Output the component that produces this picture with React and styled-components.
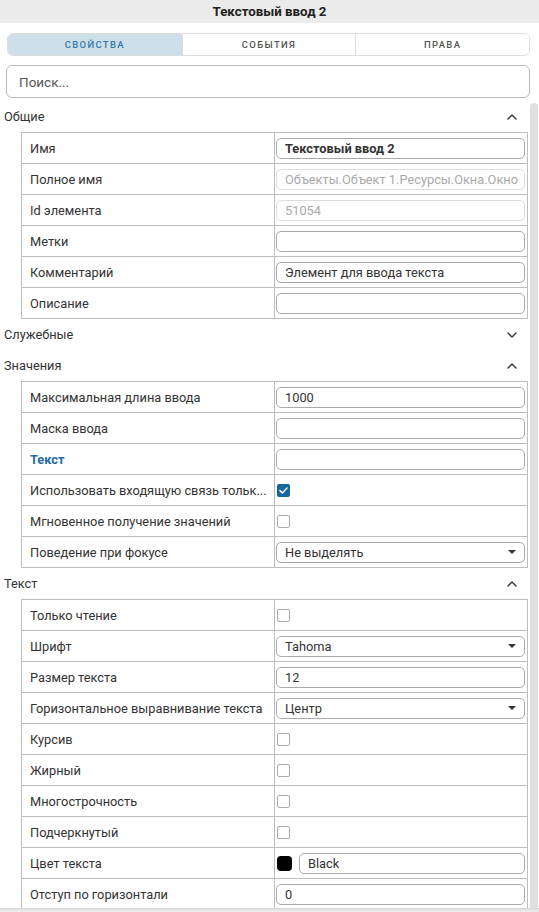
import React from 'react';
import styled, { createGlobalStyle } from 'styled-components';

const GlobalStyle = createGlobalStyle`
  html, body {
    margin: 0;
    padding: 0;
    background: #ffffff;
  }
  * {
    box-sizing: border-box;
  }
  body {
    font-family: Roboto, 'Liberation Sans', Arial, sans-serif;
    color: #333333;
  }
`;

const Panel = styled.div`
  width: 539px;
  height: 912px;
  display: flex;
  flex-direction: column;
  overflow: hidden;
`;

const TitleBar = styled.div`
  height: 23px;
  flex: none;
  background: #ebebeb;
  display: flex;
  align-items: center;
  justify-content: center;
  font-size: 13.3px;
  font-weight: 700;
  color: #222222;
`;

const Tabs = styled.div`
  margin: 10px 9px 0 7px;
  height: 23px;
  flex: none;
  display: grid;
  grid-template-columns: repeat(3, 1fr);
  border: 1px solid #dddddd;
  border-radius: 6px;
  overflow: hidden;
`;

const Tab = styled.div`
  display: flex;
  align-items: center;
  justify-content: center;
  font-size: 9.5px;
  font-weight: 500;
  letter-spacing: 1.3px;
  background: ${(p) => (p.$active ? '#cddfe9' : '#ffffff')};
  color: ${(p) => (p.$active ? '#3479a8' : '#555555')};
  & + & {
    border-left: 1px solid #dddddd;
  }
`;

const Search = styled.input`
  margin: 9px 9px 0 6px;
  height: 33px;
  flex: none;
  border: 1px solid #bbbbbb;
  border-radius: 6px;
  padding: 0 12px;
  font-family: inherit;
  font-size: 13.5px;
  color: #333333;
  outline: none;
  &::placeholder {
    color: #555555;
  }
`;

const Body = styled.div`
  flex: 1;
  min-height: 0;
  margin-top: 3px;
  display: flex;
`;

const Content = styled.div`
  flex: 1;
  min-width: 0;
  overflow: hidden;
  padding-right: 2px;
`;

const Track = styled.div`
  width: 8px;
  flex: none;
  margin-right: 1px;
  padding-top: 2px;
  display: flex;
  flex-direction: column;
`;

const Thumb = styled.div`
  flex: 1;
  background: #e0e0e0;
  border-radius: 4px 4px 0 0;
`;

const BottomEdge = styled.div`
  height: 4px;
  flex: none;
  background: linear-gradient(#d6d6d6, #f0f0f0);
`;

const SectionHead = styled.div`
  height: 31px;
  display: flex;
  align-items: center;
  justify-content: space-between;
  padding: 0 11px 0 4px;
  font-size: 12.8px;
  color: #333333;
`;

const Table = styled.div`
  margin-left: 21px;
  border: 1px solid #bdbdbd;
  border-bottom: none;
`;

const Row = styled.div`
  height: 31px;
  display: grid;
  grid-template-columns: 253px 1fr;
  border-bottom: 1px solid #bdbdbd;
`;

const Label = styled.div`
  display: flex;
  align-items: center;
  padding-left: 8px;
  border-right: 1px solid #bdbdbd;
  font-size: 12.8px;
  white-space: nowrap;
  overflow: hidden;
  color: ${(p) => (p.$accent ? '#1f6aa5' : '#333333')};
  font-weight: ${(p) => (p.$accent ? 700 : 400)};
`;

const Value = styled.div`
  display: flex;
  align-items: center;
  gap: 7px;
  padding: 0 2px 0 1px;
  min-width: 0;
`;

const Field = styled.div`
  flex: 1;
  height: 21px;
  display: flex;
  align-items: center;
  justify-content: space-between;
  padding: 0 8px;
  border: 1px solid ${(p) => (p.$disabled ? '#dddddd' : '#a9a9a9')};
  border-radius: 5px;
  font-size: 12.8px;
  white-space: nowrap;
  overflow: hidden;
  color: ${(p) => (p.$disabled ? '#aaaaaa' : '#333333')};
  font-weight: ${(p) => (p.$bold ? 700 : 400)};
`;

const Check = styled.span`
  width: 13px;
  height: 13px;
  margin-left: 1px;
  border-radius: 2px;
  display: flex;
  align-items: center;
  justify-content: center;
  border: ${(p) => (p.$on ? 'none' : '1.5px solid #aaaaaa')};
  background: ${(p) => (p.$on ? '#17679f' : '#ffffff')};
`;

const Swatch = styled.span`
  width: 15px;
  height: 15px;
  margin-left: 1px;
  border-radius: 4px;
  background: ${(p) => p.$color};
  flex: none;
`;

const Chevron = ({ up }) => (
  <svg width="10" height="6" viewBox="0 0 10 6">
    <polyline
      points={up ? '1,5 5,1 9,5' : '1,1 5,5 9,1'}
      fill="none"
      stroke="#333"
      strokeWidth="1.4"
      strokeLinecap="round"
      strokeLinejoin="round"
    />
  </svg>
);

const Caret = () => (
  <svg width="8" height="4" viewBox="0 0 8 4">
    <polygon points="0,0 8,0 4,4" fill="#333" />
  </svg>
);

const Tick = () => (
  <svg width="9" height="7" viewBox="0 0 9 7">
    <polyline points="1,3.6 3.4,6 8,1" fill="none" stroke="#fff" strokeWidth="1.5" strokeLinecap="round" strokeLinejoin="round" />
  </svg>
);

const renderValue = (v) => {
  switch (v.kind) {
    case 'check':
      return <Check $on={v.on}>{v.on && <Tick />}</Check>;
    case 'select':
      return (
        <Field>
          {v.text}
          <Caret />
        </Field>
      );
    case 'color':
      return (
        <>
          <Swatch $color={v.color} />
          <Field>{v.text}</Field>
        </>
      );
    default:
      return (
        <Field $disabled={v.disabled} $bold={v.bold}>
          {v.text}
        </Field>
      );
  }
};

const sections = [
  {
    title: 'Общие',
    open: true,
    rows: [
      { label: 'Имя', value: { text: 'Текстовый ввод 2', bold: true } },
      { label: 'Полное имя', value: { text: 'Объекты.Объект 1.Ресурсы.Окна.Окно', disabled: true } },
      { label: 'Id элемента', value: { text: '51054', disabled: true } },
      { label: 'Метки', value: { text: '' } },
      { label: 'Комментарий', value: { text: 'Элемент для ввода текста' } },
      { label: 'Описание', value: { text: '' } },
    ],
  },
  { title: 'Служебные', open: false, rows: [] },
  {
    title: 'Значения',
    open: true,
    rows: [
      { label: 'Максимальная длина ввода', value: { text: '1000' } },
      { label: 'Маска ввода', value: { text: '' } },
      { label: 'Текст', accent: true, value: { text: '' } },
      { label: 'Использовать входящую связь тольк...', value: { kind: 'check', on: true } },
      { label: 'Мгновенное получение значений', value: { kind: 'check', on: false } },
      { label: 'Поведение при фокусе', value: { kind: 'select', text: 'Не выделять' } },
    ],
  },
  {
    title: 'Текст',
    open: true,
    rows: [
      { label: 'Только чтение', value: { kind: 'check', on: false } },
      { label: 'Шрифт', value: { kind: 'select', text: 'Tahoma' } },
      { label: 'Размер текста', value: { text: '12' } },
      { label: 'Горизонтальное выравнивание текста', value: { kind: 'select', text: 'Центр' } },
      { label: 'Курсив', value: { kind: 'check', on: false } },
      { label: 'Жирный', value: { kind: 'check', on: false } },
      { label: 'Многострочность', value: { kind: 'check', on: false } },
      { label: 'Подчеркнутый', value: { kind: 'check', on: false } },
      { label: 'Цвет текста', value: { kind: 'color', color: '#000000', text: 'Black' } },
      { label: 'Отступ по горизонтали', value: { text: '0' } },
    ],
  },
];

const App = () => (
  <>
    <GlobalStyle />
    <Panel>
      <TitleBar>Текстовый ввод 2</TitleBar>
      <Tabs>
        <Tab $active>СВОЙСТВА</Tab>
        <Tab>СОБЫТИЯ</Tab>
        <Tab>ПРАВА</Tab>
      </Tabs>
      <Search placeholder="Поиск..." />
      <Body>
        <Content>
          {sections.map((s) => (
            <div key={s.title}>
              <SectionHead>
                {s.title}
                <Chevron up={s.open} />
              </SectionHead>
              {s.open && (
                <Table>
                  {s.rows.map((r) => (
                    <Row key={r.label}>
                      <Label $accent={r.accent}>{r.label}</Label>
                      <Value>{renderValue(r.value)}</Value>
                    </Row>
                  ))}
                </Table>
              )}
            </div>
          ))}
        </Content>
        <Track>
          <Thumb />
        </Track>
      </Body>
      <BottomEdge />
    </Panel>
  </>
);

export default App;
